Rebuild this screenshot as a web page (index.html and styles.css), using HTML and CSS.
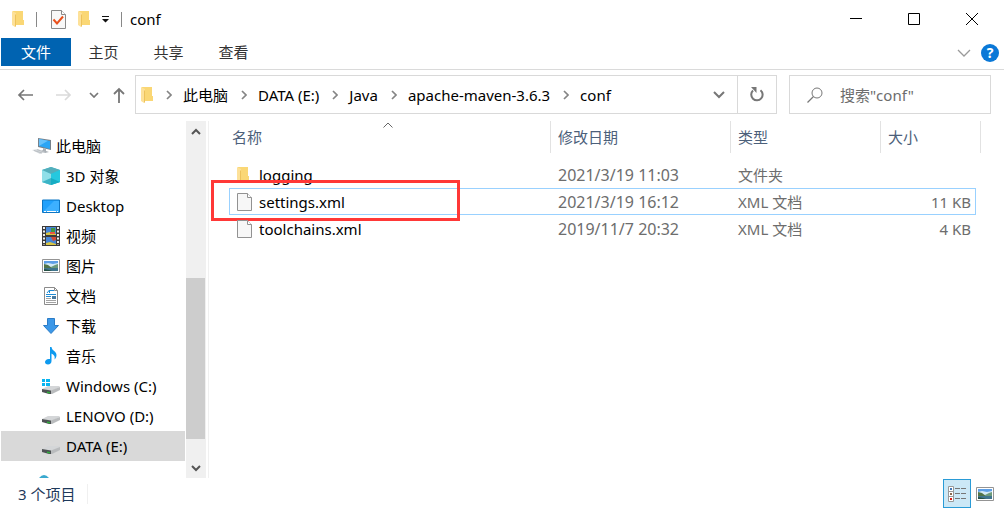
FILE: index.html
```html
<!DOCTYPE html>
<html lang="zh-CN">
<head>
    <meta charset="UTF-8">
    <meta name="viewport" content="width=device-width, initial-scale=1.0">
    <title>conf</title>
    <link rel="stylesheet" href="styles.css">
</head>
<body>
    <!-- shared icons -->
    <svg class="symbols" aria-hidden="true">
        <symbol id="folder" viewBox="0 0 12 16">
            <path d="M1 0h10v9h1v5H1z" fill="#fad775"/>
            <path d="M0 0l4 2v13l-1 1-3-2z" fill="#fde199"/>
            <path d="M3 3l1 1v11l-1 1z" fill="#edc25c"/>
        </symbol>
        <symbol id="file" viewBox="0 0 15 18">
            <path d="M.5.5h10l4 4v13H.5z" fill="#f7f7f7" stroke="#929292"/>
            <path d="M10.500.5v4h4" fill="#fff" stroke="#929292"/>
        </symbol>
        <symbol id="chevron" viewBox="0 0 6 10">
            <path d="M1 1l4 4-4 4" fill="none" stroke="#858585" stroke-width="1.700"/>
        </symbol>
        <symbol id="drive" viewBox="0 0 18 18">
            <path d="M0 12l6-3h11l1 1-8 4z" fill="#d4d6d8"/>
            <path d="M0 12l9 1.500V17H7l-7-2z" fill="#4d5153"/>
            <path d="M9 13.500l9-3.500v3l-8 4H9z" fill="#b9bbbd"/>
            <path d="M5 14.500l3 .6v1.400l-3-.6z" fill="#2fae3b"/>
        </symbol>
        <symbol id="picture" viewBox="0 0 18 14">
            <path d="M.5.5h17v13H.5z" fill="#fff" stroke="#949494"/>
            <path d="M2 2h14v10H2z" fill="#5e9fe6"/>
            <path d="M2 5l4-1 5 1 5-1v5H2z" fill="#d4eaf6"/>
            <path d="M2 5l4 1 4 3H2z" fill="#527448"/>
            <path d="M9 8l4-2 3-1v4H9z" fill="#6d9a7b"/>
            <path d="M2 9h14v3H2z" fill="#40758d"/>
            <path d="M2 10l5 1 3 1H2z" fill="#244f43"/>
        </symbol>
    </svg>

    <header class="titlebar">
        <svg class="folder-icon"><use href="#folder"/></svg>
        <span class="divider"></span>
        <button type="button" class="quick" aria-label="属性">
            <svg width="15" height="19" viewBox="0 0 15 19"><path d="M.5.5h10l4 4v14H.5z" fill="#f8f8f8" stroke="#8a8a8a"/><path d="M10.500.5v4h4" fill="#fff" stroke="#8a8a8a"/><path d="M2.500 9.500l3.500 4 6-7" fill="none" stroke="#e8501c" stroke-width="2"/></svg>
        </button>
        <button type="button" class="quick" aria-label="新建文件夹">
            <svg class="folder-icon"><use href="#folder"/></svg>
        </button>
        <button type="button" class="quick" aria-label="自定义快速访问工具栏">
            <svg width="7" height="7" viewBox="0 0 7 7"><path d="M0 0h7v1H0zM0 3h7L3.500 6.500z" fill="#111"/></svg>
        </button>
        <span class="divider"></span>
        <h1 class="title">conf</h1>
        <div class="window-buttons">
            <button type="button" aria-label="最小化"><svg width="12" height="12"><path d="M0 5.500h12" stroke="#000"/></svg></button>
            <button type="button" aria-label="最大化"><svg width="12" height="12"><path d="M.5.5h11v11H.5z" fill="none" stroke="#000"/></svg></button>
            <button type="button" aria-label="关闭"><svg width="12" height="12"><path d="M0 0l12 12M12 0L0 12" stroke="#000"/></svg></button>
        </div>
    </header>

    <div class="ribbon">
        <button type="button" class="tab tab-file">文件</button>
        <button type="button" class="tab">主页</button>
        <button type="button" class="tab">共享</button>
        <button type="button" class="tab">查看</button>
        <div class="ribbon-right">
            <button type="button" aria-label="展开功能区"><svg width="14" height="8"><path d="M1 1l6 6 6-6" fill="none" stroke="#9a9a9a" stroke-width="1.300"/></svg></button>
            <button type="button" class="help" aria-label="帮助">?</button>
        </div>
    </div>

    <div class="address-row">
        <div class="history">
            <button type="button" class="arrow" aria-label="返回"><svg width="16" height="12"><path d="M16 6H2M7 1L2 6l5 5" fill="none" stroke="#777" stroke-width="1.700"/></svg></button>
            <button type="button" class="arrow" aria-label="前进"><svg width="16" height="12"><path d="M0 6h14M9 1l5 5-5 5" fill="none" stroke="#dadada" stroke-width="1.700"/></svg></button>
            <button type="button" class="recent" aria-label="最近浏览的位置"><svg width="10" height="6"><path d="M1 1l4 4 4-4" fill="none" stroke="#777" stroke-width="1.700"/></svg></button>
            <button type="button" class="up" aria-label="上移"><svg width="12" height="16"><path d="M6 16V2M1 7l5-5 5 5" fill="none" stroke="#777" stroke-width="1.800"/></svg></button>
        </div>
        <div class="address">
            <svg class="folder-icon"><use href="#folder"/></svg>
            <svg class="chevron"><use href="#chevron"/></svg>
            <a href="#">此电脑</a>
            <svg class="chevron"><use href="#chevron"/></svg>
            <a href="#">DATA (E:)</a>
            <svg class="chevron"><use href="#chevron"/></svg>
            <a href="#">Java</a>
            <svg class="chevron"><use href="#chevron"/></svg>
            <a href="#">apache-maven-3.6.3</a>
            <svg class="chevron"><use href="#chevron"/></svg>
            <a href="#">conf</a>
            <button type="button" class="drop" aria-label="上一个位置"><svg width="12" height="8"><path d="M1 1l5 5 5-5" fill="none" stroke="#777" stroke-width="2"/></svg></button>
            <button type="button" class="refresh" aria-label="刷新"><svg width="14" height="15" viewBox="0 0 14 15"><path d="M10.500 3.200a5.700 5.700 0 1 1-7.500.3" fill="none" stroke="#777" stroke-width="2"/><path d="M1 0h5.500v6z" fill="#777"/></svg></button>
        </div>
        <label class="search">
            <svg width="16" height="16"><circle cx="10" cy="6" r="5" fill="none" stroke="#777"/><path d="M6.500 9.500L.5 15.500" stroke="#777" stroke-width="1.300"/></svg>
            <input type="text" placeholder='搜索"conf"' aria-label="搜索">
        </label>
    </div>

    <main class="content">
        <nav class="tree">
            <a href="#" class="root">
                <svg width="19" height="18" viewBox="0 0 19 18"><path d="M6 1l13 2v10L6 10z" fill="#76818b"/><path d="M7 2l11 2v8L7 9z" fill="#2ba5f5"/><path d="M7 2l9 1.700L7 9z" fill="#67c1fb"/><path d="M11 11l3 1v2l3 1-4 1-4-2 2-1z" fill="#a9afb5"/><path d="M0 13l6-1 7 3-5 2z" fill="#d5d9dd"/><path d="M2 13.500l8 2.500M5 12.700l7 2.300" stroke="#aeb3b8" stroke-width=".7"/></svg>
                此电脑
            </a>
            <a href="#">
                <svg width="18" height="18" viewBox="0 0 18 18"><path d="M9 0l9 3v12l-9 3-9-3V3z" fill="#33bfd0"/><path d="M0 3l9-3 9 3-9 4z" fill="#54aebb"/><path d="M0 3l9 4v11l-9-3z" fill="#90dfe8"/><path d="M9 7l9-4v12l-9 3z" fill="#25c8df"/><path d="M9 11l9 4-9 3-9-3z" fill="#109db3" opacity=".65"/></svg>
                3D 对象
            </a>
            <a href="#">
                <svg width="18" height="18" viewBox="0 0 18 18"><path d="M.5 3h17v12.500H.5z" fill="#20a0fb" stroke="#0d76c4"/><path d="M1 15l11-11h5v11z" fill="#3db0ff"/><path d="M2 14.500h2M5 14.500h9M15 14.500h1" stroke="#fff"/></svg>
                Desktop
            </a>
            <a href="#">
                <svg width="18" height="20" viewBox="0 0 18 20"><path d="M0 0h18v20H0z" fill="#3b3b3b"/><path d="M2 1v18M16 1v18" stroke="#eee" stroke-width="2" stroke-dasharray="2 1.500"/><path d="M4 1h10v8H4zM4 11h10v8H4z" fill="#4786d6"/><path d="M4 7l4-1 6 2v1H4zM4 17l4-1 6 2v1H4z" fill="#d9c542"/><path d="M9 2h4v4H9z" fill="#439542"/><path d="M8 6h5v2H8z" fill="#ea5640"/><path d="M9 11h5v3l-3 1z" fill="#cf4938"/></svg>
                视频
            </a>
            <a href="#">
                <svg width="18" height="14"><use href="#picture"/></svg>
                图片
            </a>
            <a href="#">
                <svg width="18" height="18" viewBox="0 0 18 18"><path d="M2.500.5h10l3 3v14h-13z" fill="#fff" stroke="#8b8b8b"/><path d="M12.500.5v3h3" fill="none" stroke="#8b8b8b"/><path d="M5 6l2.500-3v3M8 3.500h4M4 7.500h10M4 9.500h5" fill="none" stroke="#208bd4"/><path d="M4 11.500h5M4 13.500h10M4 15.500h10" stroke="#a3a3a3"/><path d="M10 9h4v3h-4z" fill="#487aa0"/></svg>
                文档
            </a>
            <a href="#">
                <svg width="18" height="18" viewBox="0 0 18 18"><path d="M5.500 1.500h7v7h4L9 16.500 1.500 8.500h4z" fill="#3c98e8" stroke="#2b7cc7"/></svg>
                下载
            </a>
            <a href="#">
                <svg width="18" height="18" viewBox="0 0 18 18"><path d="M8 0h1.500c.5 4 5 4 5 8 0 2-1 3.500-2 4.500 1-4-1.500-5-3-6V14c0 2-1.500 3.500-3.500 3.500S3 16.500 3 15c0-2 2-3.500 5-3z" fill="#0e9aef"/></svg>
                音乐
            </a>
            <a href="#">
                <svg width="18" height="18" viewBox="0 0 18 18"><use href="#drive"/><path d="M0 2h3v3H0zM4 2h4v3H4zM0 6h3v3H0zM4 6h4v3H4z" fill="#09b5f1"/></svg>
                Windows (C:)
            </a>
            <a href="#">
                <svg width="18" height="18"><use href="#drive"/></svg>
                LENOVO (D:)
            </a>
            <a href="#" class="current">
                <svg width="18" height="18"><use href="#drive"/></svg>
                DATA (E:)
            </a>
            <a href="#" class="root" aria-label="网络">
                <svg width="19" height="4" viewBox="0 0 19 4"><path d="M7 4q5-6 10 0z" fill="#3aa9cf"/></svg>
            </a>
        </nav>
        <div class="scrollbar">
            <button type="button" aria-label="向上滚动"><svg width="10" height="7"><path d="M1 6l4-4 4 4" fill="none" stroke="#555" stroke-width="2"/></svg></button>
            <div class="track"><div class="thumb"></div></div>
            <button type="button" aria-label="向下滚动"><svg width="10" height="7"><path d="M1 1l4 4 4-4" fill="none" stroke="#555" stroke-width="2"/></svg></button>
        </div>
        <section class="files">
            <table>
                <colgroup>
                    <col>
                    <col class="col-date">
                    <col class="col-type">
                    <col class="col-size">
                </colgroup>
                <thead>
                    <tr>
                        <th>名称<svg class="sort" width="10" height="6"><path d="M.5 5.500L5 1l4.500 4.500" fill="none" stroke="#666"/></svg></th>
                        <th>修改日期</th>
                        <th>类型</th>
                        <th>大小</th>
                    </tr>
                </thead>
                <tbody>
                    <tr>
                        <td><div class="name"><span class="icon"><svg class="folder-icon"><use href="#folder"/></svg></span>logging</div></td>
                        <td class="date">2021/3/19 11:03</td>
                        <td>文件夹</td>
                        <td></td>
                    </tr>
                    <tr class="focused">
                        <td><div class="name"><span class="icon"><svg width="15" height="18"><use href="#file"/></svg></span>settings.xml<span class="marker"></span></div></td>
                        <td class="date">2021/3/19 16:12</td>
                        <td>XML 文档</td>
                        <td>11 KB</td>
                    </tr>
                    <tr>
                        <td><div class="name"><span class="icon"><svg width="15" height="18"><use href="#file"/></svg></span>toolchains.xml</div></td>
                        <td class="date">2019/11/7 20:32</td>
                        <td>XML 文档</td>
                        <td>4 KB</td>
                    </tr>
                </tbody>
            </table>
        </section>
    </main>

    <footer class="status">
        <span class="count">3 个项目</span>
        <div class="views">
            <button type="button" class="view active" aria-label="详细信息">
                <svg width="18" height="16" viewBox="0 0 18 16"><path d="M.5.5h5v15h-5zM.5 5.500h5M.5 10.500h5" fill="#fff" stroke="#999"/><path d="M2 2h2v2H2z" fill="#4377b5"/><path d="M2 7h2v2H2z" fill="#8b6b50"/><path d="M2 12h2v2H2z" fill="#d91c10"/><path d="M7 2.500h5M13 2.500h5M7 7.500h5M13 7.500h5M7 12.500h5M13 12.500h5" stroke="#777"/></svg>
            </button>
            <button type="button" class="view" aria-label="大缩略图">
                <svg width="18" height="14"><use href="#picture"/></svg>
            </button>
        </div>
    </footer>
</body>
</html>
```
FILE: styles.css
```css
* {
    box-sizing: border-box;
}

body {
    display: flex;
    flex-direction: column;
    height: 100vh;
    margin: 0;
    background-color: #fff;
    color: #000;
    font-family: "Noto Sans", "Noto Sans CJK SC", sans-serif;
    font-size: 15px;
    line-height: 20px;
    overflow: hidden;
}

button {
    display: flex;
    align-items: center;
    justify-content: center;
    padding: 0;
    border: none;
    background: none;
    color: inherit;
    font: inherit;
}

a {
    color: inherit;
    text-decoration: none;
}

svg {
    display: block;
    flex: none;
}

.symbols {
    position: absolute;
    width: 0;
    height: 0;
}

.folder-icon {
    width: 12px;
    height: 16px;
}

/* title bar */
.titlebar {
    display: flex;
    flex: none;
    align-items: center;
    gap: 12px;
    height: 38px;
    padding: 0 3px 0 12px;
}

.divider {
    width: 1px;
    height: 15px;
    background-color: #888;
}

.divider + .quick {
    margin-left: 2px;
}

.title {
    margin: 0 auto 0 -4px;
    font-size: 15px;
    font-weight: normal;
}

.window-buttons {
    display: flex;
}

.window-buttons button {
    width: 58px;
    height: 38px;
}

/* ribbon */
.ribbon {
    display: flex;
    flex: none;
    height: 32px;
    padding: 0 5px 2px 1px;
    border-bottom: 1px solid #dadada;
}

.tab {
    width: 65px;
    height: 28px;
    color: #333;
}

.tab-file {
    width: 70px;
    background-color: #0063b1;
    color: #fff;
}

.ribbon-right {
    display: flex;
    align-items: center;
    gap: 10px;
    margin-left: auto;
}

.help {
    width: 18px;
    height: 18px;
    border-radius: 50%;
    background-color: #0a78d7;
    color: #fff;
    font-size: 14px;
    font-weight: bold;
}

/* address bar */
.address-row {
    display: flex;
    flex: none;
    padding: 5px 13px 7px 5px;
}

.history {
    display: flex;
    width: 130px;
}

.arrow {
    width: 39px;
}

.recent {
    width: 21px;
}

.up {
    width: 30px;
}

.address {
    display: flex;
    flex: 1;
    align-items: center;
    height: 39px;
    padding-left: 5px;
    border: 1px solid #d9d9d9;
    white-space: nowrap;
}

.chevron {
    width: 6px;
    height: 10px;
    margin: 0 11px 0 13px;
}

.drop {
    width: 37px;
    height: 100%;
    margin-left: auto;
}

.refresh {
    width: 39px;
    height: 100%;
    border-left: 1px solid #d9d9d9;
}

.search {
    display: flex;
    align-items: center;
    gap: 17px;
    width: 202px;
    margin-left: 12px;
    padding-left: 17px;
    border: 1px solid #d9d9d9;
}

.search input {
    flex: 1;
    min-width: 0;
    padding: 0;
    border: none;
    outline: none;
    font: inherit;
}

.search input::placeholder {
    color: #6d6d6d;
}

/* navigation tree */
.content {
    display: flex;
    flex: 1;
    min-height: 0;
}

.tree {
    width: 185px;
    padding: 10px 0 0 1px;
    overflow: hidden;
}

.tree a {
    display: flex;
    align-items: center;
    gap: 6px;
    height: 30px;
    padding-left: 41px;
}

.tree .root {
    gap: 5px;
    padding-left: 31px;
}

.tree .current {
    background-color: #d9d9d9;
}

.scrollbar {
    display: flex;
    flex-direction: column;
    width: 20px;
    margin-left: 1px;
    background-color: #f0f0f0;
}

.scrollbar button {
    height: 20px;
}

.track {
    display: flex;
    flex: 1;
    flex-direction: column;
    justify-content: flex-end;
    padding: 0 1px 19px 0;
}

.thumb {
    height: 54%;
    background-color: #cdcdcd;
}

/* file list */
.files {
    flex: 1;
    margin-left: 2px;
    padding: 0 28px 0 20px;
    border-left: 1px solid #f0f0f0;
}

table {
    width: 100%;
    table-layout: fixed;
    border-collapse: collapse;
}

.col-date {
    width: 180px;
}

.col-type {
    width: 150px;
}

.col-size {
    width: 96px;
}

th {
    position: relative;
    height: 32px;
    padding: 0 0 0 8px;
    color: #4c607a;
    font-weight: normal;
    text-align: left;
}

th::before {
    content: "";
    position: absolute;
    top: 0;
    bottom: 0;
    left: 0;
    border-left: 1px solid #e2e2e2;
}

th:first-child {
    padding-left: 3px;
}

th:first-child::before {
    display: none;
}

th:last-child::after {
    content: "";
    position: absolute;
    top: 0;
    right: -5px;
    bottom: 0;
    border-left: 1px solid #e2e2e2;
}

.sort {
    position: absolute;
    top: 1px;
    left: calc(50% - 7px);
}

tbody::before {
    content: "";
    display: block;
    height: 8px;
}

td {
    height: 27px;
    padding: 0 0 0 8px;
    color: #6d6d6d;
}

td:last-child {
    padding-right: 5px;
    text-align: right;
}

.date {
    font-size: 16px;
}

.focused {
    outline: 1px solid #99d1ff;
    outline-offset: -1px;
}

.name {
    position: relative;
    display: flex;
    align-items: center;
    gap: 7px;
    color: #000;
}

.icon {
    width: 15px;
}

/* red frame round the file of interest */
.marker {
    position: absolute;
    top: -12px;
    left: -26px;
    width: 249px;
    height: 41px;
    border: 3px solid #ff3837;
}

/* status bar */
.status {
    display: flex;
    flex: none;
    align-items: center;
    height: 31px;
    padding: 0 5px 0 18px;
    color: #1e395b;
}

.count {
    padding-right: 12px;
    border-right: 1px solid #f0f0f0;
}

.views {
    display: flex;
    margin-left: auto;
}

.view {
    width: 28px;
    height: 29px;
}

.active {
    border: 1px solid #2a9bd6;
    background-color: #cce8f6;
}
```
